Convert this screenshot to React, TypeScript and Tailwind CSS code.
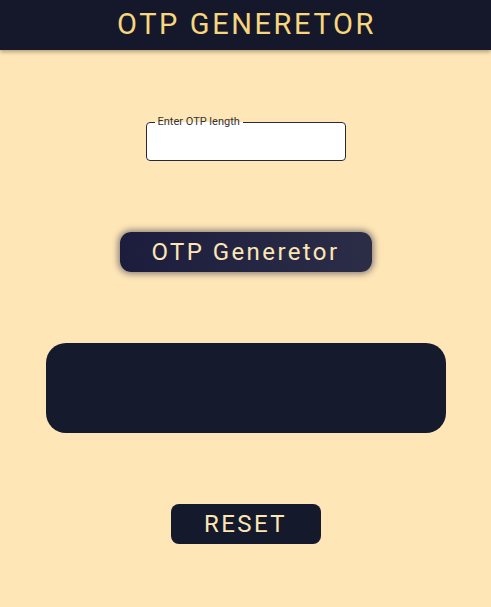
export default function App() {
  return (
    <div className="min-h-screen bg-[#fee6b7] font-['Roboto',sans-serif]">
      <header className="flex h-[50px] items-center justify-center bg-[#15182b] shadow-[0_2px_4px_rgba(0,0,0,0.3)]">
        <h1 className="pl-[2px] text-[29px] font-normal tracking-[2.6px] text-[#f7d67e]">OTP GENERETOR</h1>
      </header>

      <div className="flex flex-col items-center">
        <fieldset className="mt-[66px] h-[45px] w-[200px] rounded-[4px] border border-[#2a2a36] bg-white px-[8px]">
          <legend className="px-[3px] text-[11px] leading-[12px] text-[#333]">Enter OTP length</legend>
        </fieldset>

        <button className="mt-[71px] h-[40px] w-[252px] rounded-[11px] bg-gradient-to-r from-[#1c1d3d] to-[#2c2d47] text-[24px] tracking-[2.4px] text-[#fde6b5] shadow-[0_0_6px_2px_rgba(30,30,60,0.5)]">
          OTP Generetor
        </button>

        <div className="mt-[71px] h-[90px] w-[400px] rounded-[20px] bg-[#151a2c]" />

        <button className="mt-[71px] h-[40px] w-[150px] rounded-[8px] bg-[#15192c] text-[24px] tracking-[2.4px] text-[#fde6b5]">
          RESET
        </button>
      </div>
    </div>
  );
}
